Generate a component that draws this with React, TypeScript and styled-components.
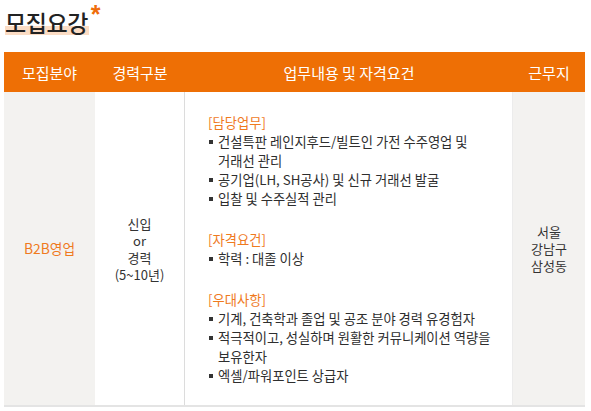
import React from 'react';
import styled, { createGlobalStyle } from 'styled-components';

const GlobalStyle = createGlobalStyle`
  html, body {
    margin: 0;
    padding: 0;
    background: #ffffff;
  }
  body {
    font-family: 'Noto Sans CJK KR', 'Noto Sans', sans-serif;
    color: #333333;
  }
`;

const Page = styled.div`
  width: 591px;
  padding: 4px 6px 0 4px;
  box-sizing: border-box;
`;

const TitleRow = styled.div`
  height: 48px;
  padding-left: 1px;
  display: flex;
  align-items: flex-start;
`;

const Title = styled.h2`
  position: relative;
  margin: 4px 0 0 0;
  font-size: 23px;
  font-weight: 500;
  line-height: 29px;
  letter-spacing: -0.4px;
  color: #222222;
  background: linear-gradient(to bottom, transparent 62%, #fbdcc4 62%, #fbdcc4 92%, transparent 92%);
  padding-right: 1px;
`;

const Star = styled.span`
  position: absolute;
  right: -11px;
  top: -7px;
  font-family: 'Liberation Sans', Arial, sans-serif;
  font-size: 25px;
  line-height: 26px;
  font-weight: 700;
  color: #ef6d0b;
`;

const Table = styled.div`
  display: grid;
  grid-template-columns: 91px 90px 328px 72px;
  border-bottom: 2px solid #e4e4e4;
`;

const HeadCell = styled.div`
  height: 40px;
  background: #ee6f05;
  color: #ffffff;
  font-size: 15px;
  font-weight: 400;
  display: flex;
  align-items: center;
  justify-content: center;
`;

const Cell = styled.div<{ $shade?: boolean; $divider?: boolean }>`
  background: ${(p) => (p.$shade ? '#f3f2f0' : '#ffffff')};
  border-right: ${(p) => (p.$divider ? '1px solid #dcdcdc' : 'none')};
  display: flex;
  flex-direction: column;
  align-items: center;
  justify-content: center;
  text-align: center;
  font-size: 13px;
  line-height: 17px;
  color: #333333;
`;

const Field = styled.span`
  color: #ef7a1e;
  font-size: 13.8px;
`;

const Detail = styled.div`
  border-right: 1px solid #ececec;
  padding: 22px 0 20px 23px;
  font-size: 13.3px;
  line-height: 19px;
  color: #2e2e2e;
`;

const Group = styled.div`
  & + & {
    margin-top: 23px;
  }
`;

const GroupTitle = styled.div`
  color: #ef7a1e;
  line-height: 18px;
`;

const List = styled.ul`
  list-style: none;
  margin: 0;
  padding: 0;
`;

const Item = styled.li`
  position: relative;
  padding-left: 10px;

  &::before {
    content: '';
    position: absolute;
    left: 1px;
    top: 8px;
    width: 4px;
    height: 4px;
    background: #333333;
  }
`;

const groups = [
  {
    title: '[담당업무]',
    items: [
      ['건설특판 레인지후드/빌트인 가전 수주영업 및', '거래선 관리'],
      ['공기업(LH, SH공사) 및 신규 거래선 발굴'],
      ['입찰 및 수주실적 관리'],
    ],
  },
  {
    title: '[자격요건]',
    items: [['학력 : 대졸 이상']],
  },
  {
    title: '[우대사항]',
    items: [
      ['기계, 건축학과 졸업 및 공조 분야 경력 유경험자'],
      ['적극적이고, 성실하며 원활한 커뮤니케이션 역량을', '보유한자'],
      ['엑셀/파워포인트 상급자'],
    ],
  },
];

const App: React.FC = () => {
  return (
    <Page>
      <GlobalStyle />
      <TitleRow>
        <Title>
          모집요강
          <Star>*</Star>
        </Title>
      </TitleRow>

      <Table>
        <HeadCell>모집분야</HeadCell>
        <HeadCell>경력구분</HeadCell>
        <HeadCell>업무내용 및 자격요건</HeadCell>
        <HeadCell>근무지</HeadCell>

        <Cell $shade>
          <Field>B2B영업</Field>
        </Cell>
        <Cell $divider>
          <div>신입</div>
          <div>or</div>
          <div>경력</div>
          <div>(5~10년)</div>
        </Cell>
        <Detail>
          {groups.map((g) => (
            <Group key={g.title}>
              <GroupTitle>{g.title}</GroupTitle>
              <List>
                {g.items.map((lines) => (
                  <Item key={lines[0]}>
                    {lines.map((l, i) => (
                      <React.Fragment key={l}>
                        {i > 0 && <br />}
                        {l}
                      </React.Fragment>
                    ))}
                  </Item>
                ))}
              </List>
            </Group>
          ))}
        </Detail>
        <Cell $shade>
          <div>서울</div>
          <div>강남구</div>
          <div>삼성동</div>
        </Cell>
      </Table>
    </Page>
  );
};

export default App;
